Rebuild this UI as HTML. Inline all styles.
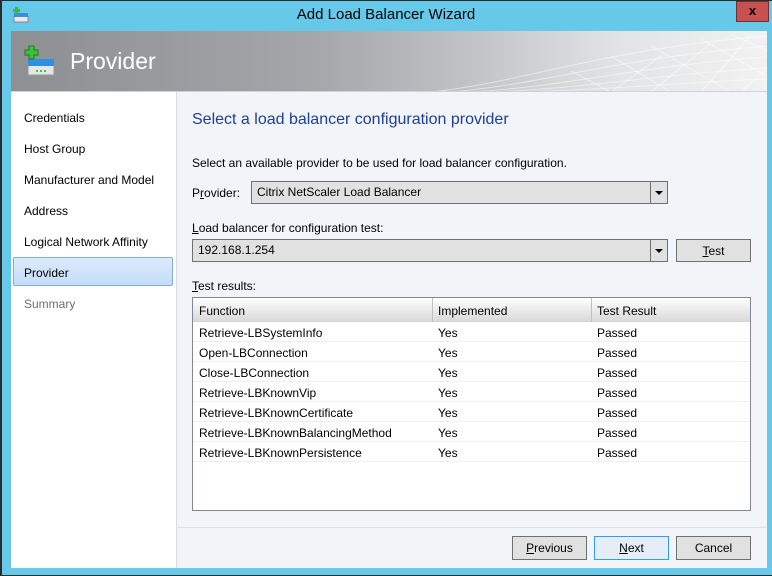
<!DOCTYPE html>
<html><head><style>
*{margin:0;padding:0;box-sizing:border-box}
body{width:772px;height:576px;background:#66c9e9;position:relative;overflow:hidden;font-family:"Liberation Sans",sans-serif;font-size:12px;color:#000}
.a{position:absolute}
.t{white-space:nowrap}
u{text-decoration:underline}
.btn{position:absolute;background:#e1e1e1;border:1px solid #707070;text-align:center;line-height:22px;font-size:12px}
.dd{position:absolute;background:#e1e1e1;border:1px solid #707070;line-height:21px;padding-left:5px}
.dd .ar{position:absolute;right:0;top:0;width:17px;height:100%;border-left:1px solid #707070}
.dd .ar:after{content:"";position:absolute;left:4px;top:9px;border:4px solid transparent;border-top:4px solid #000;border-bottom:0}
.nav{position:absolute;left:24px;font-size:12px}
</style></head><body>
<div class="a" style="left:0;top:0;width:772px;height:1px;background:#2b2b2b"></div>
<div class="a" style="left:0;top:0;width:2px;height:576px;background:#2b2b2b"></div>
<div class="a" style="left:0;top:575px;width:772px;height:1px;background:#2b2b2b"></div>
<svg class="a" style="left:12px;top:6px" width="18" height="18" viewBox="0 0 18 18"><rect x="2" y="10" width="14" height="6" fill="#e8e8e8" stroke="#888"/><rect x="2" y="7" width="14" height="4" fill="#3a8fd8"/><path d="M3 1h3v2h2v3H6v2H3V6H1V3h2z" fill="#3cba3c"/></svg>
<div class="a t" style="left:0;width:772px;top:6px;text-align:center;font-size:15px;color:#000">Add Load Balancer Wizard</div>
<div class="a" style="left:736px;top:1px;width:33px;height:21px;background:#c75050;border:1px solid #6b3030;text-align:center;font-weight:bold;font-size:13px;line-height:18px">x</div>
<div class="a" style="left:11px;top:31px;width:756px;height:61px;background:linear-gradient(90deg,#8d8f92 0%,#a4a6a9 40%,#bfc1c4 60%,#e2e3e5 80%,#f2f2f2 100%);overflow:hidden;border-bottom:1px solid #d0d2d5">
<svg width="756" height="61" style="position:absolute;left:0;top:0"><g stroke="#fff" stroke-opacity=".5" fill="none" stroke-width="1">
<path d="M420 61C520 50 580 20 756 5"/><path d="M440 61C540 52 600 28 756 15"/><path d="M460 61C560 55 620 36 756 26"/><path d="M480 61C580 57 640 44 756 37"/><path d="M500 61C600 59 660 52 756 48"/><path d="M560 40 600 61M600 25 660 61M640 15 720 61M690 8 756 45M720 3 756 20"/><path d="M600 61 650 25M640 61 700 12M690 61 740 4M730 61 756 38"/></g></svg>
</div>
<svg class="a" style="left:24px;top:45px" width="34" height="32" viewBox="0 0 34 32"><rect x="4" y="20" width="26" height="10" fill="#e6e6e6" stroke="#999"/><rect x="4" y="14" width="26" height="7" fill="#2f8fe0"/><path d="M12 26h2M16 26h2M20 26h2" stroke="#3c3" stroke-width="2"/><path d="M5 1h5v4h4v5h-4v4H5v-4H1V5h4z" fill="#3cc03c" stroke="#1d7d1d"/></svg>
<div class="a t" style="left:70px;top:48px;font-size:23px;color:#fff">Provider</div>
<div class="a" style="left:11px;top:92px;width:166px;height:476px;background:#fff;border-right:1px solid #d9dde2"></div>
<div class="a" style="left:13px;top:257px;width:160px;height:29px;background:linear-gradient(#dcebfc,#c4ddf8);border:1px solid #84acdd;border-radius:2px"></div>
<div class="nav t" style="top:111px">Credentials</div>
<div class="nav t" style="top:142px">Host Group</div>
<div class="nav t" style="top:173px">Manufacturer and Model</div>
<div class="nav t" style="top:204px">Address</div>
<div class="nav t" style="top:235px">Logical Network Affinity</div>
<div class="nav t" style="top:266px">Provider</div>
<div class="nav t" style="top:297px;color:#6d6d6d">Summary</div>
<div class="a" style="left:177px;top:92px;width:590px;height:476px;background:#f1f4f8"></div>
<div class="a t" style="left:192px;top:111px;font-size:16px;color:#1e3e97">Select a load balancer configuration provider</div>
<div class="a t" style="left:192px;top:156px">Select an available provider to be used for load balancer configuration.</div>
<div class="a t" style="left:192px;top:186px">P<u>r</u>ovider:</div>
<div class="dd t" style="left:251px;top:181px;width:417px;height:23px">Citrix NetScaler Load Balancer<div class="ar"></div></div>
<div class="a t" style="left:192px;top:221px"><u>L</u>oad balancer for configuration test:</div>
<div class="dd t" style="left:192px;top:239px;width:476px;height:23px">192.168.1.254<div class="ar"></div></div>
<div class="btn" style="left:676px;top:239px;width:75px;height:23px"><u>T</u>est</div>
<div class="a t" style="left:192px;top:279px"><u>T</u>est results:</div>
<div class="a" style="left:192px;top:297px;width:559px;height:214px;background:#fff;border:1px solid #828790">
<div style="height:24px;background:linear-gradient(#fff,#e8e8e8 60%,#dadada);border-bottom:1px solid #d5d5d5;position:relative">
<div class="a t" style="left:6px;top:6px">Function</div>
<div class="a" style="left:239px;top:0;width:1px;height:24px;background:#c0c0c0"></div>
<div class="a t" style="left:245px;top:6px">Implemented</div>
<div class="a" style="left:398px;top:0;width:1px;height:24px;background:#c0c0c0"></div>
<div class="a t" style="left:404px;top:6px">Test Result</div>
</div>
</div>
<div class="a" style="left:177px;top:527px;width:590px;height:1px;background:#dcdfe3"></div>
<div class="btn" style="left:512px;top:536px;width:75px;height:24px"><u>P</u>revious</div>
<div class="btn" style="left:594px;top:536px;width:75px;height:24px;border-color:#3399ff;background:#e5eef8"><u>N</u>ext</div>
<div class="btn" style="left:676px;top:536px;width:75px;height:24px">Cancel</div>
<div class="a" style="left:193px;top:322px;width:557px">
<div style="position:relative;height:20px;border-bottom:1px solid #f0f0f0"><span class="a t" style="left:6px;top:4px">Retrieve-LBSystemInfo</span><span class="a" style="left:245px;top:4px">Yes</span><span class="a" style="left:404px;top:4px">Passed</span></div>
<div style="position:relative;height:20px;border-bottom:1px solid #f0f0f0"><span class="a t" style="left:6px;top:4px">Open-LBConnection</span><span class="a" style="left:245px;top:4px">Yes</span><span class="a" style="left:404px;top:4px">Passed</span></div>
<div style="position:relative;height:20px;border-bottom:1px solid #f0f0f0"><span class="a t" style="left:6px;top:4px">Close-LBConnection</span><span class="a" style="left:245px;top:4px">Yes</span><span class="a" style="left:404px;top:4px">Passed</span></div>
<div style="position:relative;height:20px;border-bottom:1px solid #f0f0f0"><span class="a t" style="left:6px;top:4px">Retrieve-LBKnownVip</span><span class="a" style="left:245px;top:4px">Yes</span><span class="a" style="left:404px;top:4px">Passed</span></div>
<div style="position:relative;height:20px;border-bottom:1px solid #f0f0f0"><span class="a t" style="left:6px;top:4px">Retrieve-LBKnownCertificate</span><span class="a" style="left:245px;top:4px">Yes</span><span class="a" style="left:404px;top:4px">Passed</span></div>
<div style="position:relative;height:20px;border-bottom:1px solid #f0f0f0"><span class="a t" style="left:6px;top:4px">Retrieve-LBKnownBalancingMethod</span><span class="a" style="left:245px;top:4px">Yes</span><span class="a" style="left:404px;top:4px">Passed</span></div>
<div style="position:relative;height:20px;border-bottom:1px solid #f0f0f0"><span class="a t" style="left:6px;top:4px">Retrieve-LBKnownPersistence</span><span class="a" style="left:245px;top:4px">Yes</span><span class="a" style="left:404px;top:4px">Passed</span></div>
</div>
</body></html>
